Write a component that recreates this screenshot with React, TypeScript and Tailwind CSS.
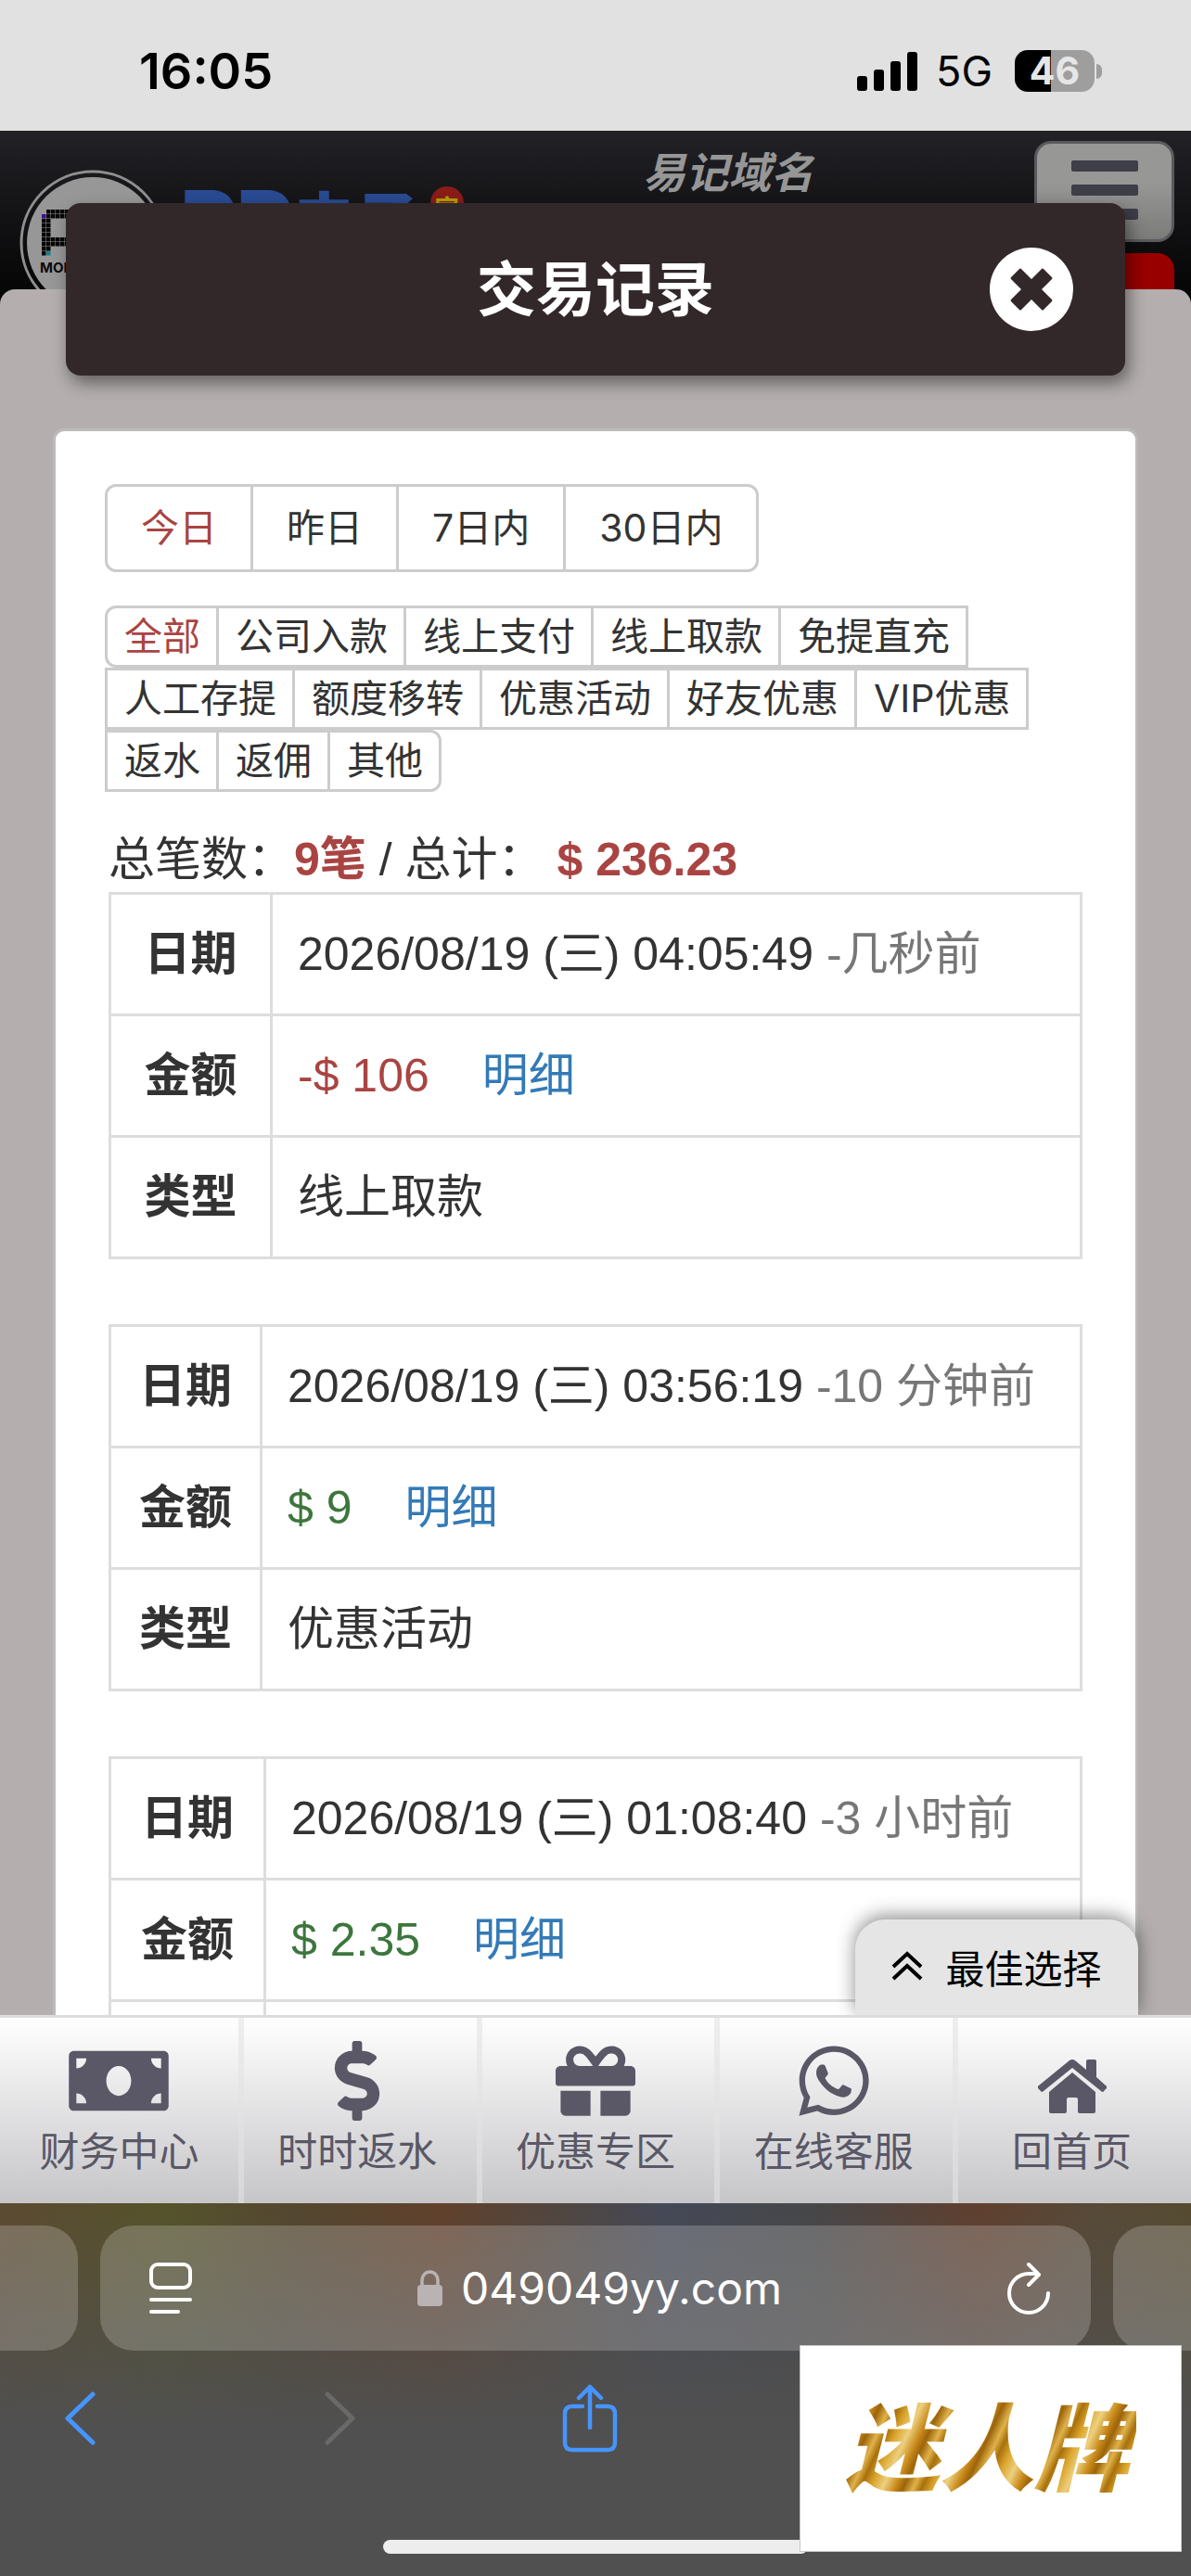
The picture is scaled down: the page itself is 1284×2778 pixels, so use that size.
import { useState } from "react";
import clsx from "clsx";
import { FaDollarSign, FaGift, FaMoneyBill, FaWhatsapp } from "react-icons/fa";

const RANGES = ["今日", "昨日", "7日内", "30日内"];

const CATEGORIES = [
  "全部", "公司入款", "线上支付", "线上取款", "免提直充",
  "人工存提", "额度移转", "优惠活动", "好友优惠", "VIP优惠",
  "返水", "返佣", "其他",
];

const RECORDS = [
  { date: "2026/08/19 (三) 04:05:49", ago: "-几秒前", amount: "-$ 106", type: "线上取款", col: "w-[174px]" },
  { date: "2026/08/19 (三) 03:56:19", ago: "-10 分钟前", amount: "$ 9", type: "优惠活动", col: "w-[163px]" },
  { date: "2026/08/19 (三) 01:08:40", ago: "-3 小时前", amount: "$ 2.35", type: "优惠活动", col: "w-[167px]" },
];

function StatusBar() {
  return (
    <div className="flex h-[141px] shrink-0 items-center justify-between bg-[#e1e1e1] pt-3 pr-24 pl-[150px] text-black">
      <span className="text-[54px] font-semibold">16:05</span>
      <div className="flex items-center">
        <svg width="65" height="42" viewBox="0 0 65 42">
          <rect x="0" y="26" width="11" height="16" rx="3" />
          <rect x="18" y="19" width="11" height="23" rx="3" />
          <rect x="36" y="10" width="11" height="32" rx="3" />
          <rect x="54" y="0" width="11" height="42" rx="3" />
        </svg>
        <span className="ml-5 text-[45px] leading-none">5G</span>
        <div className="ml-6 flex h-[45px] w-[86px] items-center justify-center rounded-[14px] bg-linear-to-r from-black from-45% to-[#9e9e9e] to-45% text-[41px] leading-none font-bold text-[#e6e6e6]">
          46
        </div>
        <div className="ml-[2px] h-4 w-[6px] rounded-r-full bg-[#9e9e9e]" />
      </div>
    </div>
  );
}

// dot-matrix letter in the round badge
const DOTS = [
  " ######## ", "##########", "##      ##", "##      ##", "##      ##",
  "##      ##", "##########", "######### ", "##        ", "##        ",
];

function Badge() {
  return (
    <svg width="158" height="158" viewBox="0 0 158 158">
      <circle cx="79" cy="79" r="77" fill="none" stroke="#8f8f8f" strokeWidth="3" />
      <circle cx="79" cy="79" r="71" fill="#979797" />
      {DOTS.map((row, y) =>
        row.split("").map((c, x) =>
          c === "#" ? (
            <rect
              key={`${x}-${y}`}
              x={24 + x * 5}
              y={43 + y * 5}
              width="4.5"
              height="4.5"
              fill={x === 0 && y === 1 ? "#3f0f8a" : x === 1 && y === 9 ? "#137f94" : "#060606"}
            />
          ) : null
        )
      )}
      <text x="22" y="111" fontSize="15" fontWeight="700" fill="#0a0a0a">MOBILE</text>
    </svg>
  );
}

function SiteHeader() {
  return (
    <header className="flex h-[187px] shrink-0 items-start justify-between overflow-hidden bg-linear-to-b from-[#222227] to-[#050505] pr-[18px] pl-[21px]">
      <div className="flex items-start pt-[42px]">
        <Badge />
        <div className="flex items-start pt-[18px] pl-4 leading-[76px] font-black text-[#2a4b93]">
          <span className="text-[92px] leading-[76px]">PP</span>
          <span className="text-[68px] leading-[76px]">电子</span>
          <span className="ml-3 flex h-14 w-9 justify-center rounded-full bg-[#8a1c18] pt-2 text-[26px] leading-8 font-bold text-[#b0a000]">
            官
          </span>
        </div>
      </div>
      <a href="#domain" className="ml-auto pt-[18px] pr-[238px] text-[46px] leading-[54px] font-bold text-[#969696] italic">
        易记域名
      </a>
      <div className="flex flex-col gap-3 pt-[11px]">
        <button
          aria-label="菜单"
          className="flex h-[109px] w-[151px] flex-col items-center gap-[14px] rounded-[18px] border-[3px] border-[#5a5a5e] bg-linear-to-b from-[#979796] from-40% to-[#7b7b7a] pt-[18px]"
        >
          <span className="h-3 w-[72px] rounded-xs bg-[#3e3e49]" />
          <span className="h-3 w-[72px] rounded-xs bg-[#3e3e49]" />
          <span className="h-3 w-[72px] rounded-xs bg-[#3e3e49]" />
        </button>
        <div className="h-20 w-[151px] rounded-[18px] bg-[#980000]" />
      </div>
    </header>
  );
}

function ModalTitle() {
  return (
    <div className="absolute inset-x-[71px] top-[219px] z-10 flex h-[186px] items-center justify-center rounded-2xl bg-[#32282a] shadow-[4px_8px_18px_rgba(0,0,0,0.45)]">
      <h1 className="text-[64px] leading-[94px] font-bold text-white">交易记录</h1>
      <button aria-label="关闭" className="absolute right-14 flex size-[90px] items-center justify-center rounded-full bg-white">
        <svg width="46" height="46" viewBox="0 0 46 46" fill="#32282a">
          <path d="M10 1q1-1 2 0l11 11L34 1q1-1 2 0l9 9q1 1 0 2L34 23l11 11q1 1 0 2l-9 9q-1 1-2 0L23 34 12 45q-1 1-2 0l-9-9q-1-1 0-2l11-11L1 12q-1-1 0-2Z" />
        </svg>
      </button>
    </div>
  );
}

function Filters() {
  const [range, setRange] = useState("今日");
  const [category, setCategory] = useState("全部");

  return (
    <div className="-ml-1 text-[41px]">
      <div className="flex pl-[3px]">
        {RANGES.map((r) => (
          <button
            key={r}
            onClick={() => setRange(r)}
            className={clsx(
              "-ml-[3px] h-[95px] border-[3px] border-[#ccc] px-9 leading-none first:rounded-l-xl last:rounded-r-xl",
              range === r ? "text-[#a94442]" : "text-[#333]"
            )}
          >
            {r}
          </button>
        ))}
      </div>
      <div className="mt-9 flex flex-wrap pl-[3px]">
        {CATEGORIES.map((c) => (
          <button
            key={c}
            onClick={() => setCategory(c)}
            className={clsx(
              "-ml-[3px] h-[67px] border-[3px] border-[#ccc] pr-[17px] pl-[18px] leading-none first:rounded-l-xl last:rounded-r-xl",
              category === c ? "text-[#a94442]" : "text-[#333]"
            )}
          >
            {c}
          </button>
        ))}
      </div>
    </div>
  );
}

function RecordTable({ record }: { record: (typeof RECORDS)[number] }) {
  const negative = record.amount.startsWith("-");

  return (
    <table className="mb-[70px] w-full border-collapse text-left [&_td]:border-[3px] [&_td]:border-[#ddd] [&_td]:pl-[27px] [&_th]:border-[3px] [&_th]:border-[#ddd] [&_th]:text-center [&_tr]:h-[131px]">
      <tbody>
        <tr>
          <th scope="row" className={record.col}>日期</th>
          <td className="whitespace-nowrap">
            {record.date} <span className="text-[#777]">{record.ago}</span>
          </td>
        </tr>
        <tr>
          <th scope="row">金额</th>
          <td>
            <span className={negative ? "text-[#a94442]" : "text-[#3c763d]"}>{record.amount}</span>
            <a href="#detail" className="ml-[57px] text-[#337ab7]">明细</a>
          </td>
        </tr>
        <tr>
          <th scope="row">类型</th>
          <td>{record.type}</td>
        </tr>
      </tbody>
    </table>
  );
}

function HomeIcon() {
  return (
    <svg width="74" height="58" viewBox="0 0 74 58" fill="currentColor">
      <path d="M1 28 34 1q3-2 6 0l12 10V2q0-2 2-2h7q2 0 2 2v17l10 9q2 1 1 3l-3 3q-1 2-3 0L37 9 6 34q-2 2-3 0l-3-3q-1-2 1-3Z" />
      <path d="M37 14 12 35v21q0 2 2 2h15q2 0 2-2V43q0-2 2-2h8q2 0 2 2v13q0 2 2 2h15q2 0 2-2V35Z" />
    </svg>
  );
}

const TABS = [
  { label: "财务中心", icon: <FaMoneyBill className="h-[86px] w-[108px]" /> },
  { label: "时时返水", icon: <FaDollarSign className="h-[86px] w-[50px]" /> },
  { label: "优惠专区", icon: <FaGift className="size-[86px]" /> },
  { label: "在线客服", icon: <FaWhatsapp className="size-[86px]" /> },
  { label: "回首页", icon: <div className="pt-3"><HomeIcon /></div> },
];

function TabBar() {
  return (
    <nav className="grid h-[203px] shrink-0 grid-cols-5 border-t-[3px] border-[#ddd] bg-linear-to-b from-white to-[#c6c6c9]">
      {TABS.map((t) => (
        <a
          key={t.label}
          href="#tab"
          className="flex flex-col items-center border-l-[6px] border-[#e3e3e3]/60 pt-6 pr-[6px] text-[43px] text-[#5a5866] first:border-l-0 first:pr-0"
        >
          <span className="flex h-[88px] items-center">{t.icon}</span>
          <span className="mt-[2px] leading-[60px]">{t.label}</span>
        </a>
      ))}
    </nav>
  );
}

function BrowserBar() {
  return (
    <div className="relative h-[402px] shrink-0 overflow-hidden bg-[linear-gradient(to_bottom,transparent,#505050_60%),linear-gradient(to_right,#5c4a31,#55532a_14%,#54462f_25%,#61402a_37%,#504640_47%,#444857_56%,#464749_68%,#603f2e_82%,#574a38_92%,#564b30)] pt-6 text-white">
      <div className="flex h-[135px] gap-6">
        <div className="w-[84px] rounded-r-[36px] bg-white/20" />
        <div className="flex flex-1 items-center justify-between rounded-[36px] bg-white/20 pr-11 pl-[53px]">
          <button aria-label="页面设置">
            <svg width="46" height="56" viewBox="0 0 46 56" fill="none" stroke="white" strokeWidth="4" strokeLinecap="round">
              <rect x="2" y="2" width="42" height="25" rx="7" />
              <path d="M2 40h42M2 53h29" />
            </svg>
          </button>
          <div className="flex items-center gap-5">
            <svg width="27" height="39" viewBox="0 0 27 39">
              <rect y="16" width="27" height="23" rx="4" fill="#b9b3b3" />
              <path d="M5 18V11a8.500 9 0 0 1 17 0v7" fill="none" stroke="#b9b3b3" strokeWidth="3.500" />
            </svg>
            <span className="text-[48px] leading-none">049049yy.com</span>
          </div>
          <button aria-label="重新加载">
            <svg width="46" height="56" viewBox="0 0 46 56" fill="none" stroke="white" strokeWidth="4" strokeLinecap="round" strokeLinejoin="round">
              <path d="M33 12H23A21 21 0 1 0 44 33M23 2l11 11-11 11" />
            </svg>
          </button>
        </div>
        <div className="w-[84px] rounded-l-[36px] bg-white/20" />
      </div>

      <div className="flex items-center pt-9 pl-[69px]">
        <button aria-label="后退">
          <svg width="36" height="58" viewBox="0 0 36 58" fill="none" stroke="#4695ff" strokeWidth="5" strokeLinecap="round" strokeLinejoin="round">
            <path d="M31 3 4 29l27 26" />
          </svg>
        </button>
        <button aria-label="前进" className="ml-[244px]">
          <svg width="36" height="58" viewBox="0 0 36 58" fill="none" stroke="#696969" strokeWidth="5" strokeLinecap="round" strokeLinejoin="round">
            <path d="m4 3 27 26L4 55" />
          </svg>
        </button>
        <button aria-label="分享" className="ml-[221px]">
          <svg width="60" height="74" viewBox="0 0 60 74" fill="none" stroke="#4695ff" strokeWidth="4.500" strokeLinecap="round" strokeLinejoin="round">
            <path d="M22 24H11q-8 0-8 8v31q0 8 8 8h38q8 0 8-8V32q0-8-8-8H38" />
            <path d="M30 47V3M18 15 30 3l12 12" />
          </svg>
        </button>
      </div>

      <div className="absolute inset-x-[413px] bottom-6 h-[15px] rounded-full bg-[#ededed]" />
      <div className="absolute top-[153px] right-[10px] flex h-[223px] w-[412px] items-center justify-center border border-[#c8c8c8] bg-white">
        <span className="bg-[repeating-linear-gradient(115deg,#a8700c,#dba52c_10px,#edd080_22px,#c98a1a_34px,#9c640a_42px,#e0b24a_52px,#a8700c_60px)] bg-clip-text pr-2 text-[102px] leading-[130px] font-black text-transparent italic">
          迷人牌
        </span>
      </div>
    </div>
  );
}

export default function App() {
  return (
    <div className="relative flex h-screen flex-col overflow-hidden bg-black font-['Inter','Noto_Sans_CJK_SC',sans-serif]">
      <StatusBar />
      <SiteHeader />
      <ModalTitle />

      <main className="relative -mt-4 min-h-0 flex-1 overflow-hidden rounded-t-2xl bg-[#b4aeae]">
        <div className="h-full overflow-y-auto px-[57px] pt-[150px] [scrollbar-width:none]">
          <section className="min-h-full rounded-t-xl border-[3px] border-[#bbb] bg-white px-[57px] pt-[57px]">
            <Filters />
            <div className="font-['Liberation_Sans','Noto_Sans_CJK_SC',sans-serif] text-[50px] text-[#333]">
              <p className="mt-[38px] leading-[70px]">
                总笔数：<strong className="text-[#a94442]">9笔</strong> / 总计：
                <strong className="ml-[14px] text-[#a94442]">$ 236.23</strong>
              </p>
              {RECORDS.map((r) => (
                <RecordTable key={r.date} record={r} />
              ))}
            </div>
          </section>
        </div>
        <button className="absolute right-[57px] bottom-0 flex h-[103px] w-[305px] items-center justify-center gap-6 rounded-t-[32px] bg-[#e5e5e5] pt-1 text-[42px] text-black shadow-[0_-4px_20px_rgba(0,0,0,0.45)]">
          <svg width="34" height="32" viewBox="0 0 34 32" fill="none" stroke="black" strokeWidth="4" className="mb-2">
            <path d="M2 17 17 3l15 14M2 30l15-14 15 14" />
          </svg>
          最佳选择
        </button>
      </main>

      <TabBar />
      <BrowserBar />
    </div>
  );
}
